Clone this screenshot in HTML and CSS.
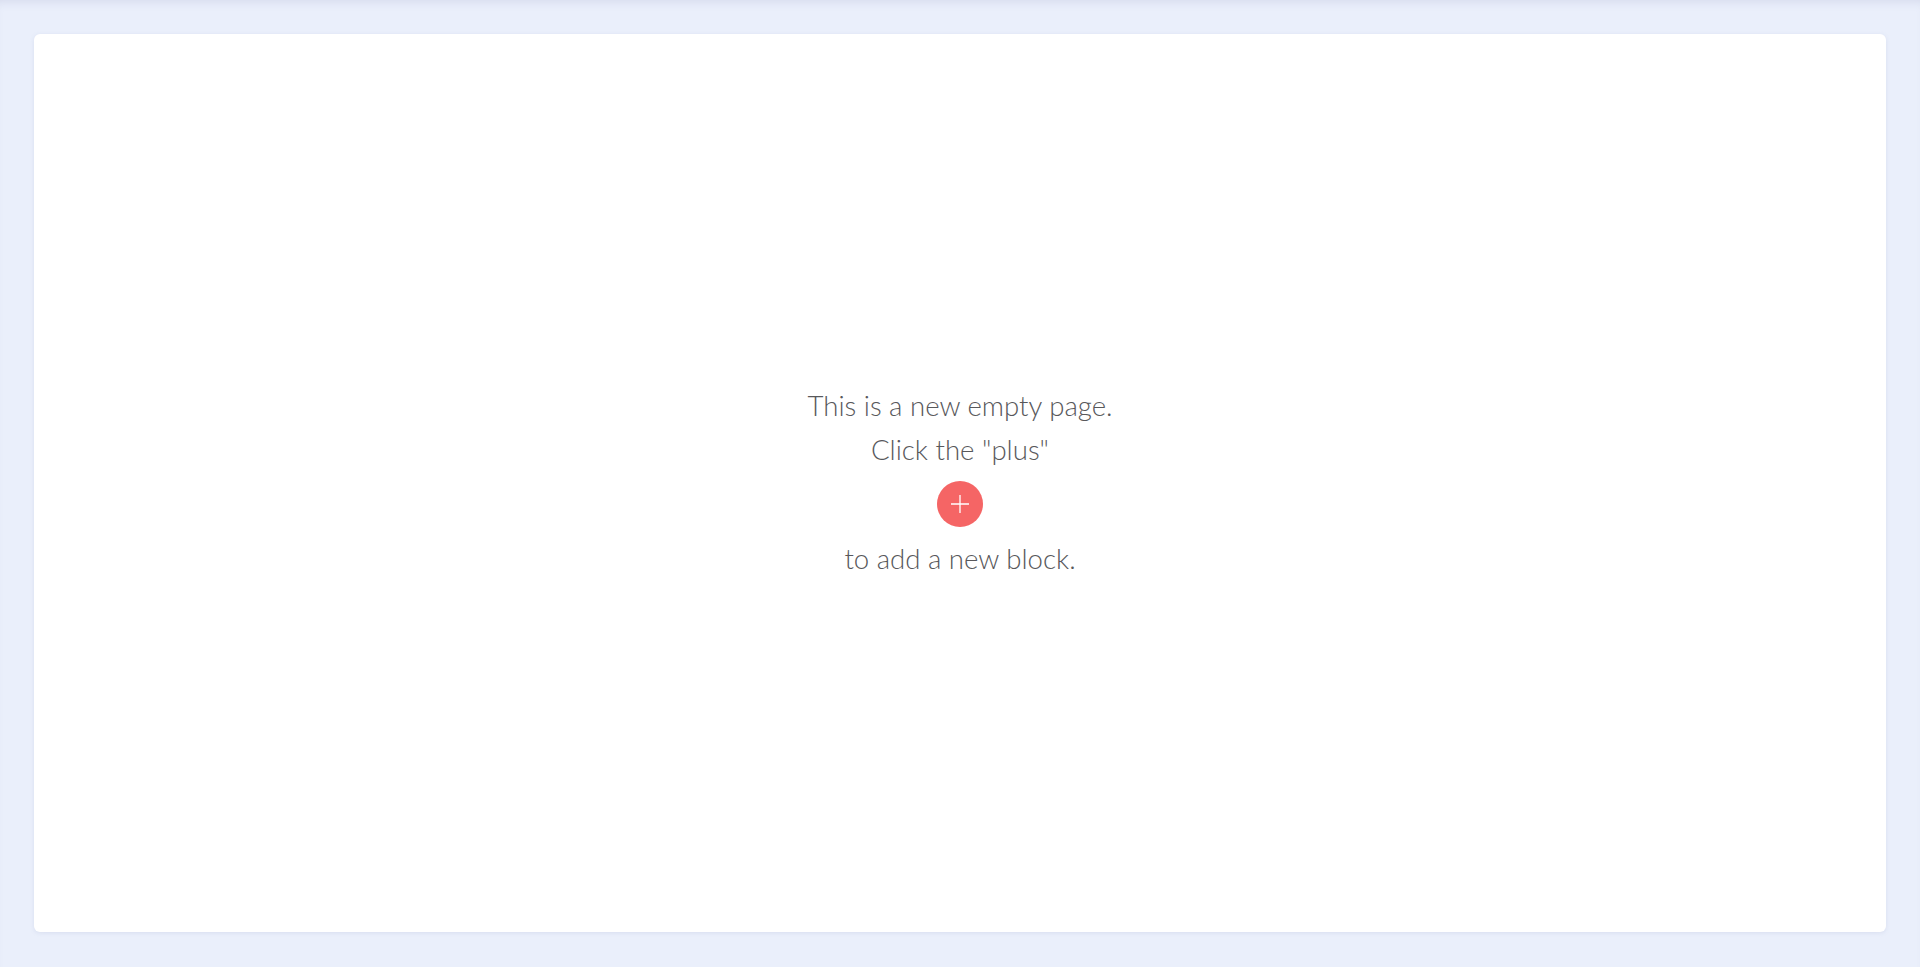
FILE: index.html
```html
<!DOCTYPE html>
<html lang="en">
<head>
<meta charset="utf-8">
<title>New page</title>
<link rel="stylesheet" href="styles.css">
</head>
<body>
<div class="page">
  <main class="card">
    <div class="empty">
      <p class="line">This is a new empty page.</p>
      <p class="line">Click the "plus"</p>
      <button class="add" type="button" aria-label="Add block">
        <svg width="20" height="20" viewBox="0 0 20 20"><path d="M10 1v18M1 10h18" stroke="#fff" stroke-width="1.3" fill="none"/></svg>
      </button>
      <p class="line">to add a new block.</p>
    </div>
  </main>
</div>
</body>
</html>
```
FILE: styles.css
```css
html, body {
  margin: 0;
  height: 100%;
}
body {
  background: #eaeffb;
  font-family: "Lato Light", Lato, "Open Sans", sans-serif;
}
.page {
  height: 100vh;
  box-sizing: border-box;
  padding: 34px 34px 35px;
  display: flex;
  box-shadow: inset 0 8px 10px -6px rgba(120, 130, 170, 0.18);
}
.card {
  flex: 1;
  background: #fff;
  border-radius: 6px;
  box-shadow: 0 1px 4px rgba(140, 150, 190, 0.18);
  display: flex;
  align-items: center;
  justify-content: center;
}
.empty {
  display: flex;
  flex-direction: column;
  align-items: center;
  padding-bottom: 1px;
}
.line {
  margin: 0;
  font-size: 27.6px;
  font-weight: 300;
  line-height: 44px;
  color: #58585b;
}
.add {
  width: 46px;
  height: 46px;
  margin: 9px 0 10px;
  padding: 0;
  border: none;
  border-radius: 50%;
  background: #f56565;
  display: flex;
  align-items: center;
  justify-content: center;
  cursor: pointer;
}
```
